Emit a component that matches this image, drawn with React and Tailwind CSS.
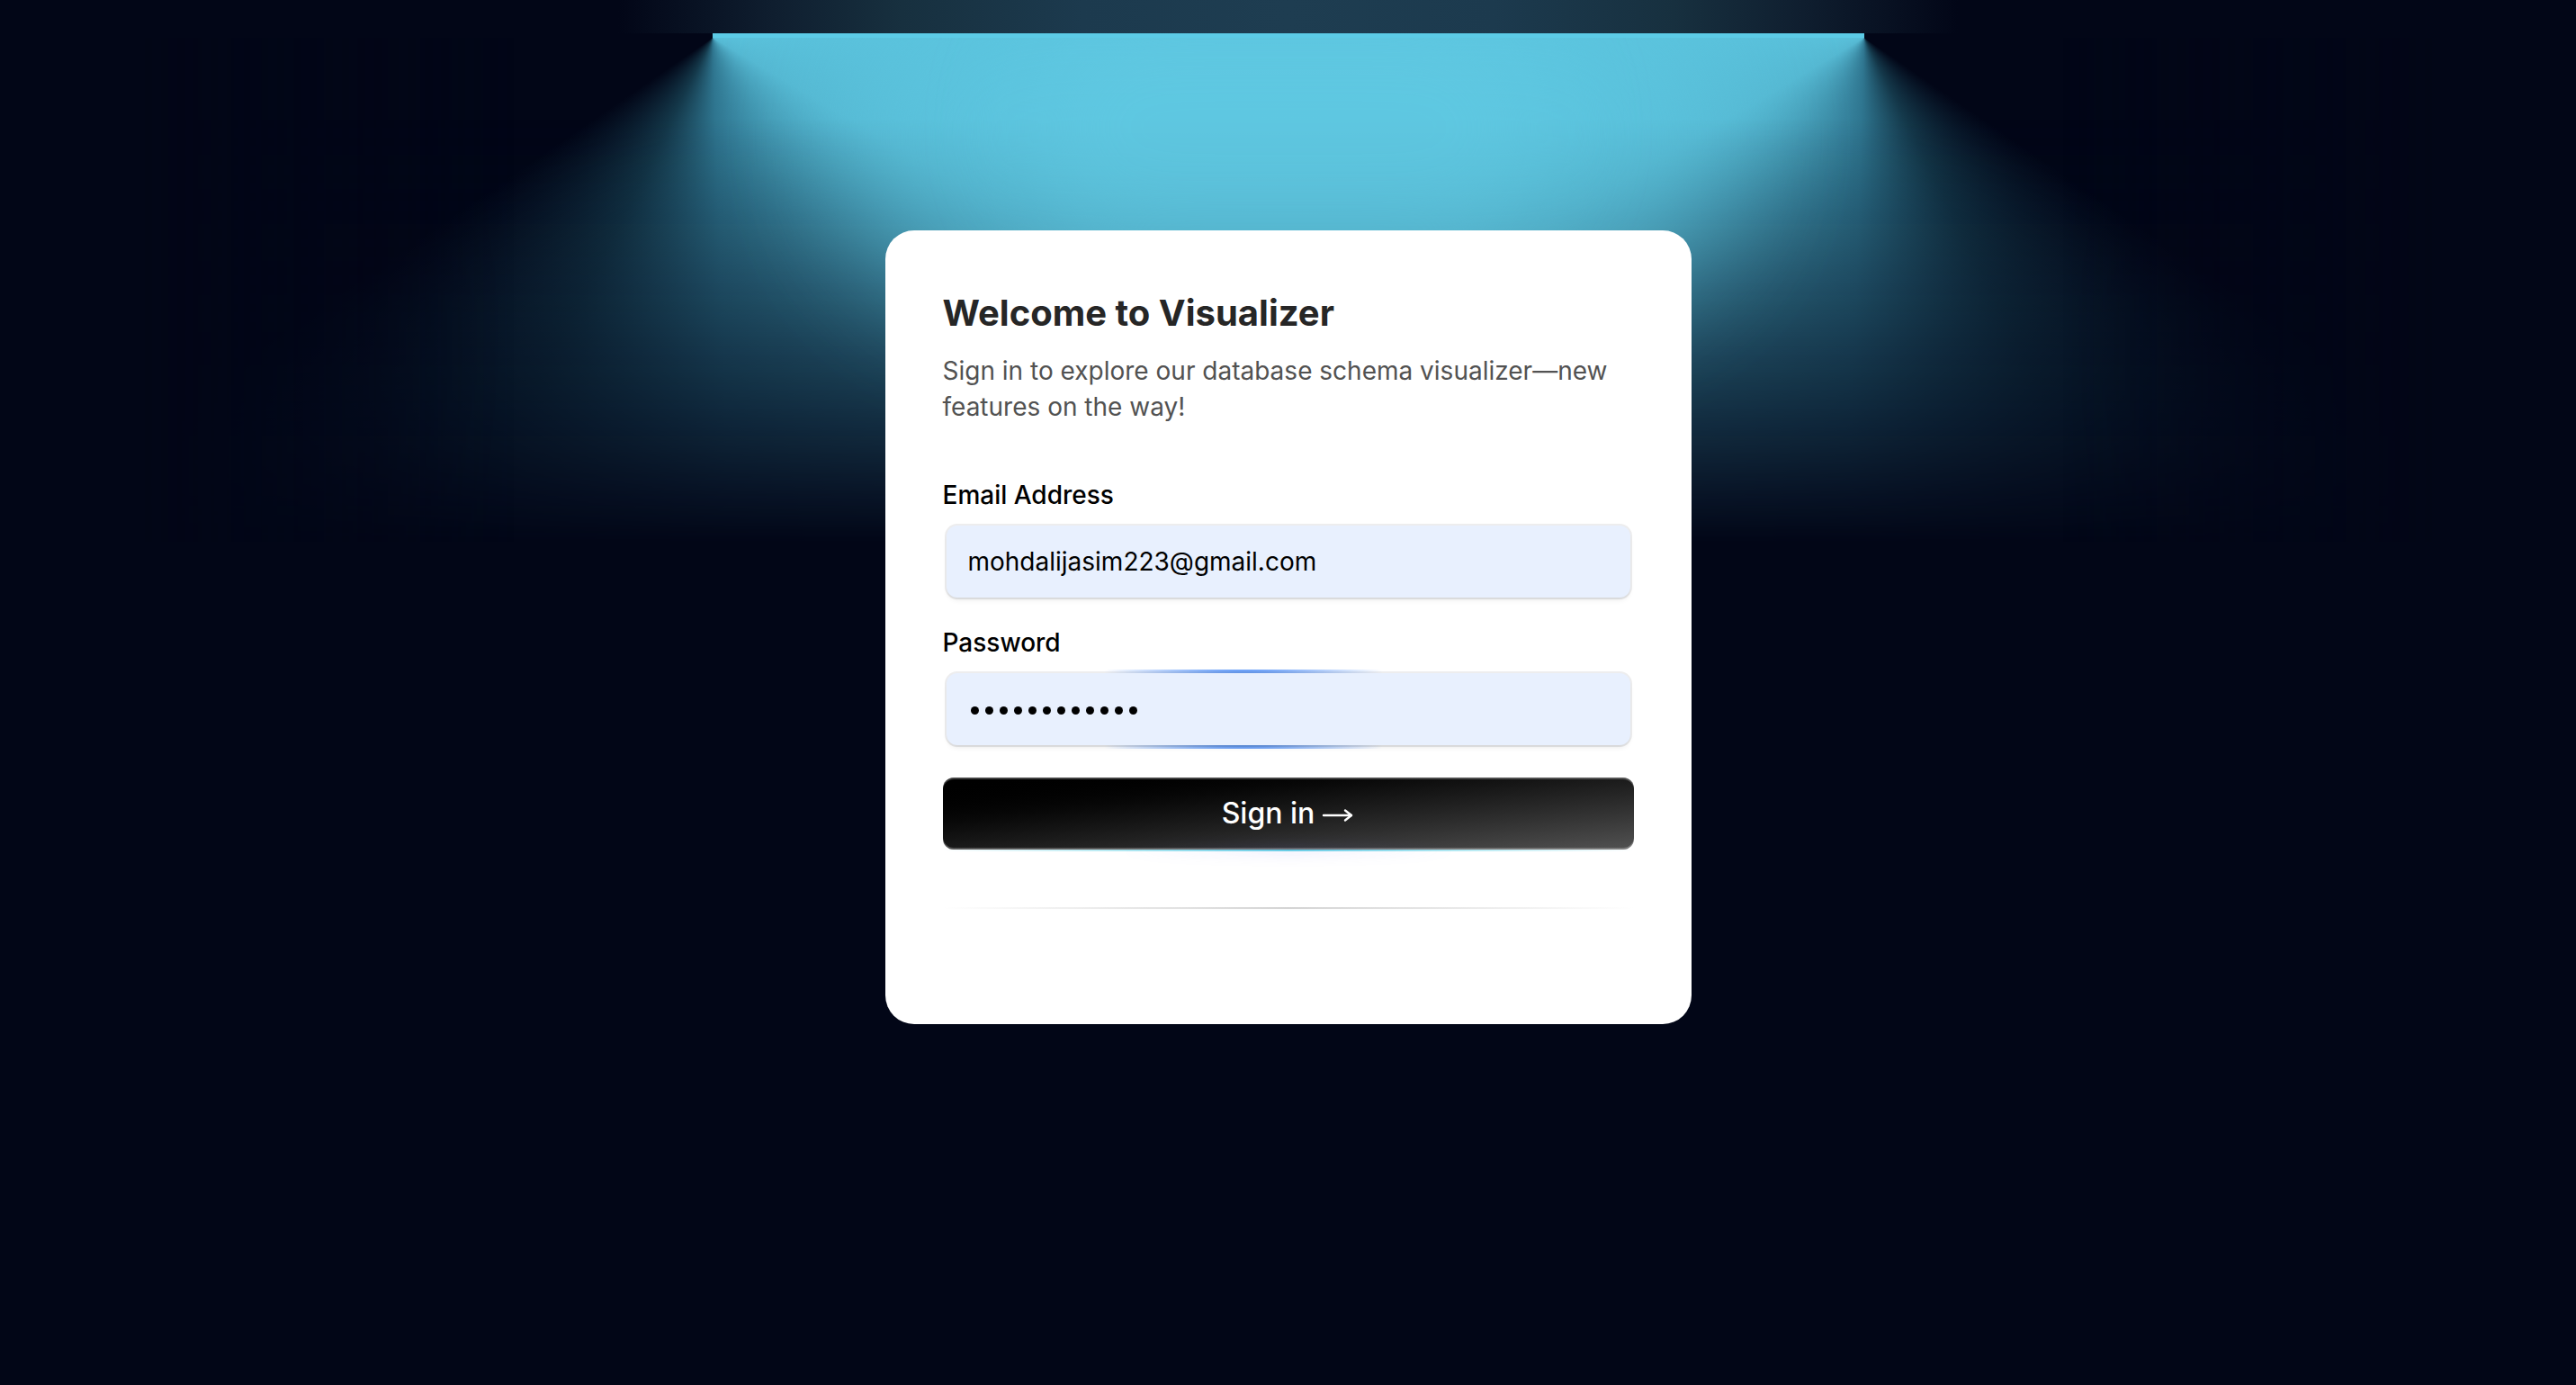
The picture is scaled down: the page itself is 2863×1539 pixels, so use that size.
import { useState } from 'react';

// decorative lamp glow behind the card
function Lamp() {
  return (
    <div className="pointer-events-none absolute inset-x-0 top-0 flex flex-col items-center">
      <div className="relative z-20 h-[37px] w-full bg-[linear-gradient(90deg,#020617_24%,#0f1e2f_30%,#17303f_35%,#1c3a4e_42%,#1e3d51_50%,#1c3a4e_58%,#17303f_65%,#0f1e2f_70%,#020617_76%)]" />
      <div className="relative z-20 h-[5px] w-[1280px] bg-[#5ccbe6]" />
      <div className="relative flex">
        <div className="relative h-[560px] w-[1280px] bg-[conic-gradient(from_70deg_at_50%_0%,#5cc6e0,#55b8d2_14%,#2f7690_30%,#14384a_38%,transparent_46%,transparent)]">
          <div className="absolute inset-x-0 bottom-0 h-[470px] bg-[#020617] [mask-image:linear-gradient(to_top,white,transparent)]" />
          <div className="absolute inset-y-0 left-0 w-[420px] bg-[#020617] [mask-image:linear-gradient(to_right,white,transparent)]" />
        </div>
        <div className="relative h-[560px] w-[1280px] bg-[conic-gradient(from_290deg_at_50%_0%,transparent,transparent_54%,#14384a_62%,#2f7690_70%,#55b8d2_86%,#5cc6e0)]">
          <div className="absolute inset-x-0 bottom-0 h-[470px] bg-[#020617] [mask-image:linear-gradient(to_top,white,transparent)]" />
          <div className="absolute inset-y-0 right-0 w-[420px] bg-[#020617] [mask-image:linear-gradient(to_left,white,transparent)]" />
        </div>
        <div className="absolute left-1/2 top-[-80px] h-[380px] w-[980px] -translate-x-1/2 rounded-full bg-[#5ec8e2] opacity-60 blur-[70px]" />
        <div className="absolute left-1/2 top-[-40px] h-[280px] w-[600px] -translate-x-1/2 rounded-full bg-[#62cbe4] opacity-50 blur-[50px]" />
      </div>
    </div>
  );
}

const inputShadow =
  'shadow-[0_4px_6px_-2px_rgba(0,0,0,0.1),0_2px_0_0_rgba(25,28,33,0.02),0_0_0_2px_rgba(25,28,33,0.08)]';

function Field({ label, children }) {
  return (
    <div className="flex w-full flex-col gap-[16px]">
      <label className="text-[28px] font-medium leading-[28px] text-black">{label}</label>
      {children}
    </div>
  );
}

export default function App() {
  const [email, setEmail] = useState('mohdalijasim223@gmail.com');
  const [password] = useState('password1234');

  return (
    <div className="relative min-h-screen w-full overflow-hidden bg-[#020617] font-['Inter',sans-serif]">
      <Lamp />
      <div className="relative z-30 flex justify-center pt-[256px]">
        <div className="w-[896px] rounded-[32px] bg-white p-[64px]">
          <h2 className="text-[40px] font-bold leading-[56px] text-[#262626]">Welcome to Visualizer</h2>
          <p className="mt-[16px] text-[28px] leading-[40px] text-[#525252]">
            Sign in to explore our database schema visualizer—new features on the way!
          </p>

          <form className="mt-[64px] flex flex-col gap-[32px]" onSubmit={(e) => e.preventDefault()}>
            <Field label="Email Address">
              <div className="rounded-[16px] p-[4px]">
                <input
                  className={'h-[80px] w-full rounded-[12px] bg-[#e8f0fe] px-[24px] text-[28px] text-black outline-none ' + inputShadow}
                  type="email"
                  value={email}
                  onChange={(e) => setEmail(e.target.value)}
                />
              </div>
            </Field>
            <Field label="Password">
              <div className="rounded-[16px] bg-[radial-gradient(200px_circle_at_334px_44px,#3b82f6,transparent_80%)] p-[4px]">
                <div className={'flex h-[80px] w-full items-center gap-[7px] rounded-[12px] bg-[#e8f0fe] pl-[27px] ' + inputShadow}>
                  {password.split('').map((_, i) => (
                    <span key={i} className="mt-[3px] h-[9px] w-[9px] rounded-full bg-black" />
                  ))}
                </div>
              </div>
            </Field>

            <button
              type="submit"
              className="relative flex h-[80px] w-full items-center justify-center gap-[8px] rounded-[12px] bg-linear-to-br from-black to-[#525252] text-[32px] font-medium text-white shadow-[inset_0_2px_0_0_#ffffff40,inset_0_-2px_0_0_#ffffff40]"
            >
              <span>Sign in</span>
              <svg width="36" height="16" viewBox="0 0 36 16" fill="none" stroke="white" strokeWidth="2.4" strokeLinecap="round" strokeLinejoin="round" className="mt-[4px]">
                <path d="M2 8H33" />
                <path d="M26 2.5L33 8L26 13.5" />
              </svg>
              <span className="absolute inset-x-0 -bottom-[2px] block h-[2px] w-full bg-linear-to-r from-transparent via-[#06b6d4] to-transparent opacity-60" />
              <span className="absolute inset-x-[80px] -bottom-[2px] mx-auto block h-[2px] w-1/2 bg-linear-to-r from-transparent via-[#6366f1] to-transparent opacity-60 blur-[8px]" />
            </button>

            <div className="mb-[64px] mt-[32px] h-[2px] w-full bg-linear-to-r from-transparent via-[#d4d4d4] to-transparent" />
          </form>
        </div>
      </div>
    </div>
  );
}
